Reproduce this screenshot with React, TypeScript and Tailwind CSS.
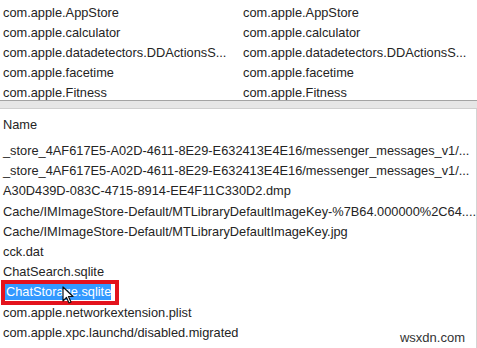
import React from "react"

const topRows = [
  "com.apple.AppStore",
  "com.apple.calculator",
  "com.apple.datadetectors.DDActionsS...",
  "com.apple.facetime",
  "com.apple.Fitness",
]

const files = [
  "_store_4AF617E5-A02D-4611-8E29-E632413E4E16/messenger_messages_v1/...",
  "_store_4AF617E5-A02D-4611-8E29-E632413E4E16/messenger_messages_v1/...",
  "A30D439D-083C-4715-8914-EE4F11C330D2.dmp",
  "Cache/IMImageStore-Default/MTLibraryDefaultImageKey-%7B64.000000%2C64....",
  "Cache/IMImageStore-Default/MTLibraryDefaultImageKey.jpg",
  "cck.dat",
  "ChatSearch.sqlite",
  "ChatStorage.sqlite",
  "com.apple.networkextension.plist",
  "com.apple.xpc.launchd/disabled.migrated",
]

function Cursor() {
  return (
    <svg className="absolute left-[62px] top-[4px]" width="14" height="20" viewBox="0 0 14 20">
      <path d="M1 1 L1 15 L4.5 11.5 L7 17 L9 16 L6.5 10.5 L11 10.5 Z" fill="#fff" stroke="#111" strokeWidth="1.2" strokeLinejoin="round" />
    </svg>
  )
}

export default function App() {
  return (
    <div
      className="w-[477px] h-[348px] bg-white overflow-hidden text-[12.8px] text-[#242424] relative"
      style={{ fontFamily: '"Liberation Sans", Arial, sans-serif' }}
    >
      {/* top list, two columns */}
      <div className="h-[100px] overflow-hidden pt-[3px] flex">
        <div className="w-[240px] pl-[3px] overflow-hidden">
          {topRows.map((r, i) => (
            <div key={i} className="h-[20px] leading-[20px] whitespace-nowrap">{r}</div>
          ))}
        </div>
        <div className="flex-1 pl-[3px] overflow-hidden">
          {topRows.map((r, i) => (
            <div key={i} className="h-[20px] leading-[20px] whitespace-nowrap">{r}</div>
          ))}
        </div>
      </div>

      {/* splitter */}
      <div className="h-[9px] bg-[#e6e6e6] border-t border-[#a3a3a3] border-b border-b-[#cfcfcf]" />

      {/* lower list */}
      <div className="border-r border-[#d4d4d4] h-[239px] pt-[6px]">
        <div className="h-[20px] leading-[20px] pl-[3px]">Name</div>
        <div className="pt-[6px]">
          {files.map((f, i) =>
            f === "ChatStorage.sqlite" ? (
              <div key={i} className="h-[20.2px] flex items-center relative">
                <div className="border-[4px] border-[#e3121c] ml-[1px] h-[25px] w-[118px] flex items-center">
                  <span className="bg-[#3399ff] text-white h-[16px] leading-[16px] w-[106px] pl-[1px] whitespace-nowrap">{f}</span>
                </div>
                <Cursor />
              </div>
            ) : (
              <div key={i} className="h-[20.2px] leading-[20px] pl-[3px] whitespace-nowrap">{f}</div>
            )
          )}
        </div>
      </div>

      <div className="absolute right-[12px] bottom-[1px] text-[13px] text-[#333]">wsxdn.com</div>
    </div>
  )
}
